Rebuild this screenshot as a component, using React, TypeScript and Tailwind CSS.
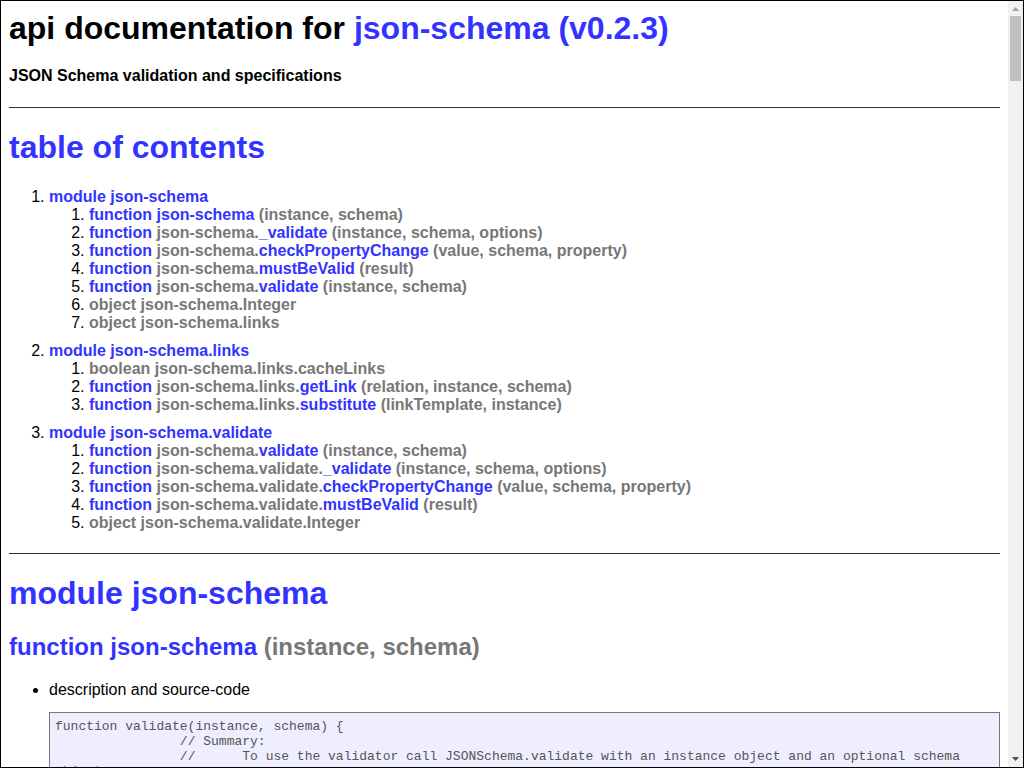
import React from "react";

const BLUE = "text-[#3333ff]";
const GRAY = "text-[#777777]";

type Part = { t: string; link?: boolean };
type Entry = { kind: string; parts: Part[]; args?: string };
type Mod = { name: string; entries: Entry[] };

const modules: Mod[] = [
  {
    name: "json-schema",
    entries: [
      { kind: "function", parts: [{ t: "json-schema", link: true }], args: "(instance, schema)" },
      { kind: "function", parts: [{ t: "json-schema." }, { t: "_validate", link: true }], args: "(instance, schema, options)" },
      { kind: "function", parts: [{ t: "json-schema." }, { t: "checkPropertyChange", link: true }], args: "(value, schema, property)" },
      { kind: "function", parts: [{ t: "json-schema." }, { t: "mustBeValid", link: true }], args: "(result)" },
      { kind: "function", parts: [{ t: "json-schema." }, { t: "validate", link: true }], args: "(instance, schema)" },
      { kind: "object", parts: [{ t: "json-schema.Integer" }] },
      { kind: "object", parts: [{ t: "json-schema.links" }] },
    ],
  },
  {
    name: "json-schema.links",
    entries: [
      { kind: "boolean", parts: [{ t: "json-schema.links.cacheLinks" }] },
      { kind: "function", parts: [{ t: "json-schema.links." }, { t: "getLink", link: true }], args: "(relation, instance, schema)" },
      { kind: "function", parts: [{ t: "json-schema.links." }, { t: "substitute", link: true }], args: "(linkTemplate, instance)" },
    ],
  },
  {
    name: "json-schema.validate",
    entries: [
      { kind: "function", parts: [{ t: "json-schema." }, { t: "validate", link: true }], args: "(instance, schema)" },
      { kind: "function", parts: [{ t: "json-schema.validate." }, { t: "_validate", link: true }], args: "(instance, schema, options)" },
      { kind: "function", parts: [{ t: "json-schema.validate." }, { t: "checkPropertyChange", link: true }], args: "(value, schema, property)" },
      { kind: "function", parts: [{ t: "json-schema.validate." }, { t: "mustBeValid", link: true }], args: "(result)" },
      { kind: "object", parts: [{ t: "json-schema.validate.Integer" }] },
    ],
  },
];

const S16 = "                ";

const validateSrc = [
  "function validate(instance, schema) {",
  S16 + "// Summary:",
  S16 + "//      To use the validator call JSONSchema.validate with an instance object and an optional schema object.",
  S16 + "//              If a schema is provided, it will be used to validate. If the instance object refers to a schema (self-validating),",
  S16 + "//              that schema will be used to validate and the schema parameter is not necessary (if both exist,",
  S16 + "//              both validations will occur).",
  S16 + "//              The validate method will return an array of validation errors. If there are no errors, then an",
  S16 + "//              empty list will be returned. A validation error will have two properties:",
  S16 + "//              \"property\" which indicates which property had the error",
  S16 + "//              \"message\" which indicates what the error was",
  S16 + "return validate(instance, schema, {changing: false});//, coerce: false, existingOnly: false});",
  "        }",
].join("\n");

const innerSrc = [
  "function (instance, schema, options) {",
  "        if (!options) options = {};",
  "        var _changing = options.changing;",
  "",
  "        function getType(schema){",
  "                return schema.type || (primitiveConstructors[schema.name] == schema && schema.name.toLowerCase());",
  "        }",
  "        var errors = [];",
  "        // validate a value against a property definition",
  "        function checkProp(value, schema, path,i){",
  "                var l;",
  "                path += path ? typeof i == 'number' ? '[' + i + ']' : typeof i == 'undefined' ? '' : '.' + i : i;",
  "                function addError(message){",
  "                        errors.push({property:path,message:message});",
  "                }",
  "                if(_changing && schema.readonly){",
  "                        addError(\"is a readonly field, it can not be changed\");",
  "                }",
  "                if(value === undefined){",
  "                        if(schema.required){",
  "                                addError(\"is missing and it is required\");",
  "                        }",
  "                }else{",
  "                        errors = errors.concat(checkType(getType(schema),value));",
  "                }",
  "                return null;",
  "        }",
  "        return {valid:!errors.length,errors:errors};",
  "}",
].join("\n");

const smallSrc = [
  "function (result){",
  "        //      summary:",
  "        //              This checks to ensure that the result is valid and will throw an appropriate error message if it is not",
  "        if(!result.valid){",
  "                throw new TypeError(result.errors.map(function(error){return \"for property \" + error.property + ': ' + error.message;}).join(\", \\n\"));",
  "        }",
  "}",
].join("\n");

function sourceFor(e: Entry): string {
  const last = e.parts[e.parts.length - 1].t;
  if (e.kind !== "function") return e.kind === "boolean" ? "false" : "{}";
  if (last === "_validate") return innerSrc;
  if (last === "validate" || last === "json-schema") return validateSrc;
  return smallSrc;
}

function EntryTitle({ e }: { e: Entry }) {
  return (
    <>
      <span className={e.kind === "function" ? BLUE : GRAY}>{e.kind} </span>
      {e.parts.map((p, i) => (
        <span key={i} className={p.link ? BLUE : GRAY}>
          {p.t}
        </span>
      ))}
      {e.args && <span className={GRAY}> {e.args}</span>}
    </>
  );
}

// the page's scrollbar, as the reference shows it
function Scrollbar() {
  return (
    <div className="flex w-[15px] shrink-0 flex-col bg-[#f1f1f1]">
      <svg width="15" height="15" viewBox="0 0 15 15">
        <polygon points="4,10 11,10 7.5,6" fill="#a3a3a3" />
      </svg>
      <div className="mx-[2px] h-[65px] bg-[#c1c1c1]" />
      <div className="flex-1" />
      <svg width="15" height="15" viewBox="0 0 15 15">
        <polygon points="4,5 11,5 7.5,9" fill="#505050" />
      </svg>
    </div>
  );
}

export default function App() {
  return (
    <div className="flex h-[768px] overflow-hidden border border-black bg-white text-black font-['Liberation_Sans',Arial,sans-serif]">
      <div className="min-w-0 flex-1 overflow-hidden px-2">
        <h1 className="mt-[9px] text-[32px] font-bold leading-[37px]">
          api documentation for <span className={BLUE}>json-schema (v0.2.3)</span>
        </h1>
        <h4 className="mt-[20px] text-[16px] font-bold leading-[18px]">
          JSON Schema validation and specifications
        </h4>
        <hr className="mt-[22px] border-t border-[#333]" />

        <h1 className={`mt-[21px] text-[32px] font-bold leading-[37px] ${BLUE}`}>table of contents</h1>
        <ol className="mt-[22px] list-decimal pl-10 text-[16px] leading-[18px]">
          {modules.map((m, mi) => (
            <li key={m.name} className={mi > 0 ? "mt-[10px]" : ""}>
              <span className={`font-bold ${BLUE}`}>module {m.name}</span>
              <ol className="list-decimal pl-10">
                {m.entries.map((e, ei) => (
                  <li key={ei}>
                    <span className="font-bold">
                      <EntryTitle e={e} />
                    </span>
                  </li>
                ))}
              </ol>
            </li>
          ))}
        </ol>
        <hr className="mt-[21px] border-t border-[#333]" />

        {modules.map((m) => (
          <div key={m.name}>
            <h1 className={`mt-[21px] text-[32px] font-bold leading-[37px] ${BLUE}`}>module {m.name}</h1>
            {m.entries.map((e, ei) => (
              <div key={ei}>
                <h2 className="mt-[21px] text-[24px] font-bold leading-[28px]">
                  <EntryTitle e={e} />
                </h2>
                <ul className="mt-[20px] list-disc pl-10 text-[16px] leading-[18px]">
                  <li>
                    description and source-code
                    <pre className="mt-[13px] border border-[#777] bg-[#eeeeff] px-[5px] pt-[6px] pb-[5px] font-['Liberation_Mono','Courier_New',monospace] text-[13px] leading-[15px] text-[#555] whitespace-pre-wrap">
                      {sourceFor(e)}
                    </pre>
                  </li>
                </ul>
              </div>
            ))}
            <hr className="mt-[22px] border-t border-[#333]" />
          </div>
        ))}
      </div>
      <Scrollbar />
    </div>
  );
}
